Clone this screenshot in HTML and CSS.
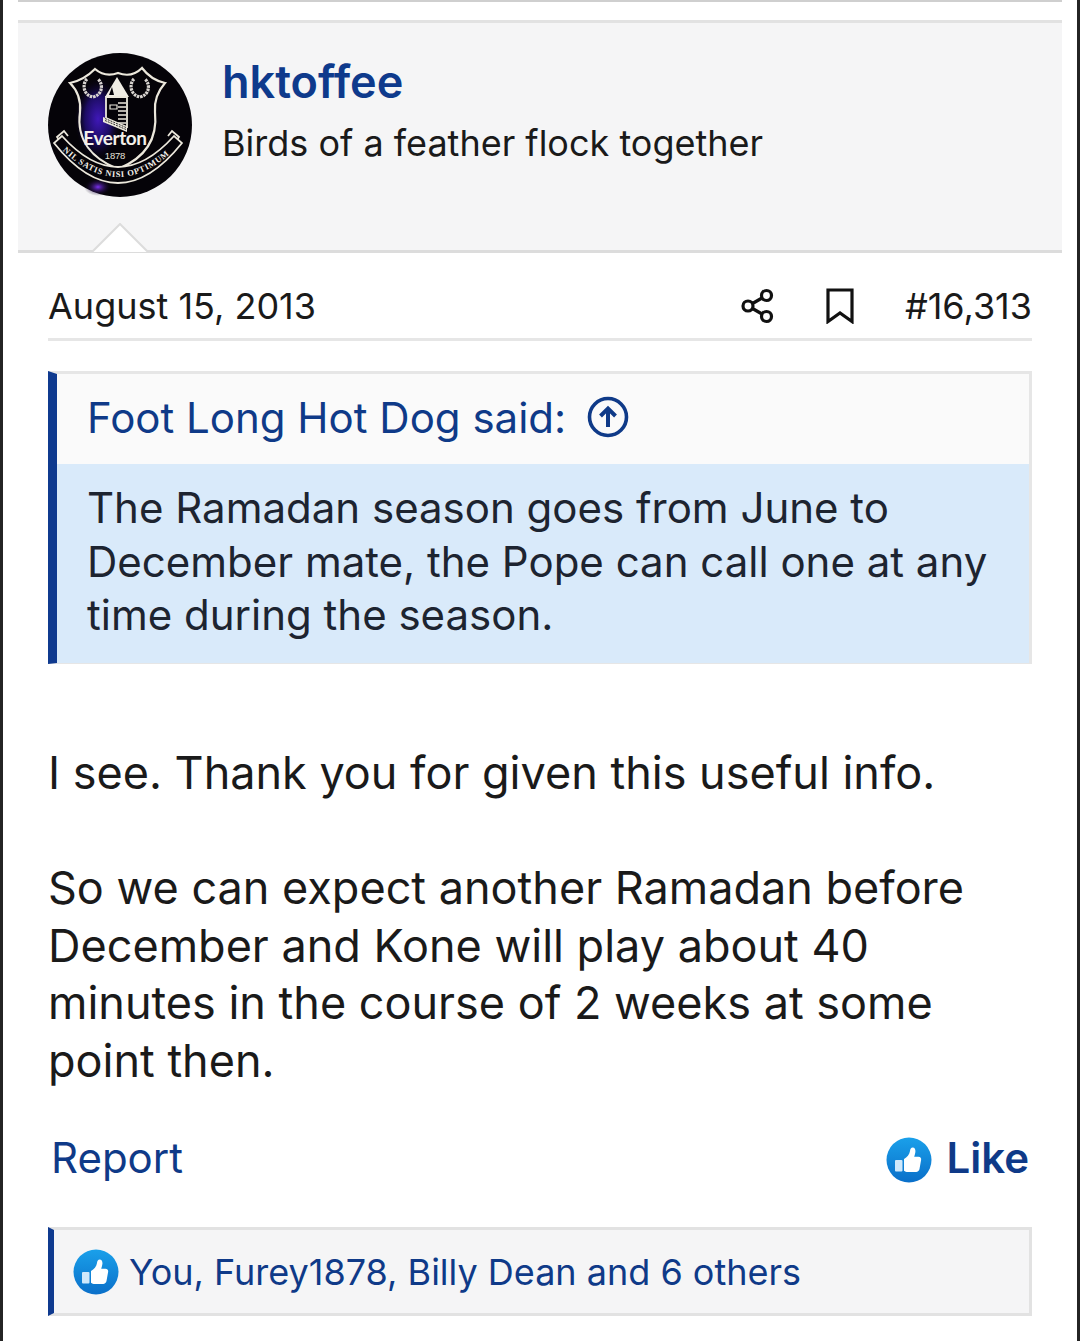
FILE: index.html
```html
<!DOCTYPE html>
<html lang="en">
<head>
<meta charset="utf-8">
<title>Post</title>
<link rel="stylesheet" href="styles.css">
</head>
<body>
<svg class="defs" width="0" height="0" aria-hidden="true">
  <defs>
    <linearGradient id="likeGrad" x1="0" y1="0" x2="0" y2="1">
      <stop offset="0" stop-color="#1aa0ea"/>
      <stop offset="1" stop-color="#0a6fc9"/>
    </linearGradient>
    <symbol id="like" viewBox="0 0 46 46">
      <circle cx="23" cy="23" r="22.500" fill="url(#likeGrad)"/>
      <path d="M10 23h5.500a1 1 0 0 1 1 1v9.500a1 1 0 0 1-1 1H10a1 1 0 0 1-1-1V24a1 1 0 0 1 1-1z" fill="#cfe8fb"/>
      <path d="M18 22c3-1.500 5.500-4.500 6-8 .3-2 1-3.500 2.700-3.500 2 0 3 2 2.700 4.500-.2 1.800-.8 3.300-1.200 4.800h4.300c2 0 3 1.600 2.600 3.300l-1.600 9c-.4 1.700-1.600 2.900-3.400 2.900H22c-1.700 0-3-.5-4-1.300z" fill="#fff"/>
    </symbol>
  </defs>
</svg>
<main class="page">
  <div class="top-rule"></div>
  <header class="user">
    <svg class="avatar" viewBox="0 0 144 144" role="img" aria-label="Everton crest">
      <defs>
        <radialGradient id="sheen" cx="0.5" cy="0.5" r="0.5">
          <stop offset="0" stop-color="#3f18b8"/>
          <stop offset="0.55" stop-color="#1c0c62"/>
          <stop offset="1" stop-color="#050308" stop-opacity="0"/>
        </radialGradient>
        <radialGradient id="sheenLow" cx="0.5" cy="0.5" r="0.5">
          <stop offset="0" stop-color="#7a30f0"/>
          <stop offset="1" stop-color="#050308" stop-opacity="0"/>
        </radialGradient>
        <path id="motto" d="M13 96 Q70 152 127 96"/>
      </defs>
      <circle cx="72" cy="72" r="72" fill="#050308"/>
      <ellipse cx="50" cy="66" rx="24" ry="42" fill="url(#sheen)"/>
      <ellipse cx="50" cy="134" rx="14" ry="9" fill="url(#sheenLow)"/>
      <path d="M22 30 C32 28 40 23 47 16 C54 22 62 23 70 20 C78 23 87 22 94 15 C100 23 108 28 117 30 C110 38 106 48 107 59 C110 88 95 106 70 116 C45 106 28 88 32 59 C33 48 30 38 22 30Z" fill="none" stroke="#ece8dc" stroke-width="2.200"/>
      <g fill="none" stroke="#d8d4d0" stroke-width="3.200" stroke-dasharray="2.500 .8">
        <path d="M39 26c-5 5-4 16 6 18 9-2 11-12 5-18"/>
        <path d="M86 26c-5 5-4 16 6 18 9-2 11-12 5-18"/>
      </g>
      <path d="M69 24 L81 44 L57 44Z" fill="#f0ede4"/>
      <path d="M64 34l-3 8h5z" fill="#050308"/>
      <path d="M58 44h21v30l-21-9z" fill="#050308" stroke="#ece8dc" stroke-width="1.800"/>
      <path d="M62 52h7v4h-7z" fill="none" stroke="#ece8dc" stroke-width="1.200"/>
      <path d="M70 50h8M70 54h8M70 58h8M70 62h8M70 66h8M70 70h8" stroke="#ece8dc" stroke-width="1.300"/>
      <path d="M55 64l24 10v5l-24-10z" fill="#ece8dc"/>
      <path d="M57 65.500l21 9M57 67.500l21 9" stroke="#050308" stroke-width=".8" stroke-dasharray="2 1"/>
      <path d="M13 90 l-4 -6 7 -6 4 5M127 90 l4 -6 -7 -6 -4 5" fill="#050308" stroke="#ece8dc" stroke-width="1.800"/>
      <path d="M6 90 Q70 170 134 90 L126 83 Q70 145 14 83Z" fill="#050308" stroke="#ece8dc" stroke-width="1.800"/>
      <text class="crest-motto"><textPath href="#motto" startOffset="2">NIL SATIS NISI OPTIMUM</textPath></text>
      <text class="crest-name" x="67" y="92" text-anchor="middle">Everton</text>
      <text class="crest-year" x="67" y="106" text-anchor="middle">1878</text>
    </svg>
    <div class="user-text">
      <a class="user-name">hktoffee</a>
      <p class="user-title">Birds of a feather flock together</p>
    </div>
    <svg class="arrow" viewBox="0 0 58 30" fill="#fff" stroke="#dcdcdc" stroke-width="2">
      <path d="M1 29 L29 1 L57 29"/>
    </svg>
  </header>

  <div class="meta">
    <time class="meta-date">August 15, 2013</time>
    <div class="meta-actions">
      <svg class="icon-share" viewBox="0 0 34 36" fill="none" stroke="#111" stroke-width="3.200">
        <circle cx="25.500" cy="7.500" r="5"/>
        <circle cx="7" cy="18" r="5"/>
        <circle cx="25.500" cy="28.500" r="5"/>
        <path d="M11.500 15.500l9.500-5.500M11.500 20.500l9.500 5.500"/>
      </svg>
      <svg class="icon-bookmark" viewBox="0 0 28 36" fill="none" stroke="#111" stroke-width="3.200">
        <path d="M2 33.500V2h24v31.500L14 25z"/>
      </svg>
      <span class="meta-num">#16,313</span>
    </div>
  </div>

  <blockquote class="quote">
    <div class="quote-head">
      <span>Foot Long Hot Dog said:</span>
      <svg class="icon-up" viewBox="0 0 42 42" fill="none" stroke="#0f3a88">
        <circle cx="21" cy="21" r="18.500" stroke-width="3.600"/>
        <path d="M21 31V13M13.500 20L21 12.500 28.500 20" stroke-width="4"/>
      </svg>
    </div>
    <div class="quote-body">The Ramadan season goes from June to December mate, the Pope can call one at any time during the season.</div>
  </blockquote>

  <article class="post">
    <p>I see. Thank you for given this useful info.</p>
    <p>So we can expect another Ramadan before December and Kone will play about 40 minutes in the course of 2 weeks at some point then.</p>
  </article>

  <div class="actions">
    <a class="report">Report</a>
    <a class="like"><svg class="like-icon"><use href="#like"/></svg>Like</a>
  </div>

  <div class="likes">
    <svg class="like-icon"><use href="#like"/></svg>
    <span>You, Furey1878, Billy Dean and 6 others</span>
  </div>
</main>
</body>
</html>
```

FILE: styles.css
```css
* { box-sizing: border-box; }
html, body { margin: 0; padding: 0; background: #fff; }
body { font-family: Inter, "Liberation Sans", sans-serif; color: #1a1a1a; }
.defs { position: absolute; }
.page {
  width: 1080px;
  height: 1341px;
  overflow: hidden;
  border-left: 3px solid #242424;
  border-right: 3px solid #242424;
  padding: 0 15px;
}
.top-rule { height: 2px; background: #cfcfcf; }
.user {
  position: relative;
  margin-top: 18px;
  height: 233px;
  display: flex;
  align-items: flex-start;
  gap: 31px;
  padding: 30px 0 0 30px;
  background: #f5f5f6;
  border-top: 3px solid #e2e2e2;
  border-bottom: 3px solid #dcdcdc;
}
.avatar { width: 144px; height: 144px; flex: none; }
.crest-name { font-family: Lato, "Liberation Sans", sans-serif; font-weight: 700; font-size: 19px; fill: #f3f0ea; letter-spacing: -.4px; }
.crest-year { font-family: "Liberation Sans", sans-serif; font-size: 9.500px; fill: #e6e2da; letter-spacing: -.2px; }
.crest-motto { font-family: "Liberation Serif", serif; font-weight: 700; font-size: 8.500px; letter-spacing: .7px; fill: #f3f0ea; }
.user-text { display: flex; flex-direction: column; margin-top: 2px; margin-left: -1px; }
.user-name { font-size: 45px; line-height: 54px; font-weight: 600; color: #0e3a8c; }
.user-title { margin: 12px 0 0; font-size: 36px; line-height: 44px; }
.arrow {
  position: absolute;
  left: 73px;
  bottom: -3px;
  width: 58px;
  height: 30px;
}
.meta {
  margin: 0 30px;
  height: 88px;
  display: flex;
  align-items: center;
  justify-content: space-between;
  padding-top: 21px;
  border-bottom: 3px solid #e6e6e6;
  font-size: 36px;
}
.meta-actions { display: flex; align-items: center; }
.icon-share { width: 34px; height: 36px; margin-right: 51px; }
.icon-bookmark { width: 28px; height: 36px; margin-right: 51px; }
.quote {
  margin: 30px 30px 0;
  height: 293px;
  border: 3px solid #e6e6e6;
  border-left: 9px solid #0f3a8f;
  border-bottom-width: 1px;
  display: flex;
  flex-direction: column;
}
.quote-head {
  height: 90px;
  flex: none;
  display: flex;
  align-items: center;
  gap: 21px;
  padding: 0 0 4px 30px;
  background: #fafafa;
  color: #0f3a88;
  font-size: 42px;
}
.icon-up { width: 42px; height: 42px; }
.quote-body {
  flex: 1;
  padding: 17px 20px 0 30px;
  background: #d9eafa;
  color: #1d2430;
  font-size: 42px;
  line-height: 53.500px;
}
.post { margin: 80px 30px 0; font-size: 45px; line-height: 57.500px; }
.post p { margin: 0 0 57.500px; }
.post p:last-child { margin-bottom: 0; }
.actions {
  margin: 43px 33px 0;
  display: flex;
  justify-content: space-between;
  align-items: center;
  font-size: 42px;
  line-height: 52px;
  color: #0f3a88;
}
.like { display: flex; align-items: center; gap: 14px; font-weight: 600; }
.like-icon { width: 46px; height: 46px; flex: none; }
.like .like-icon { margin-top: 4px; }
.likes {
  margin: 43px 30px 0;
  height: 89px;
  display: flex;
  align-items: center;
  gap: 10px;
  padding-left: 19px;
  background: #f5f5f6;
  border: 3px solid #e2e2e2;
  border-left: 6px solid #0f3a8f;
  color: #0f3a88;
  font-size: 36px;
}
```
